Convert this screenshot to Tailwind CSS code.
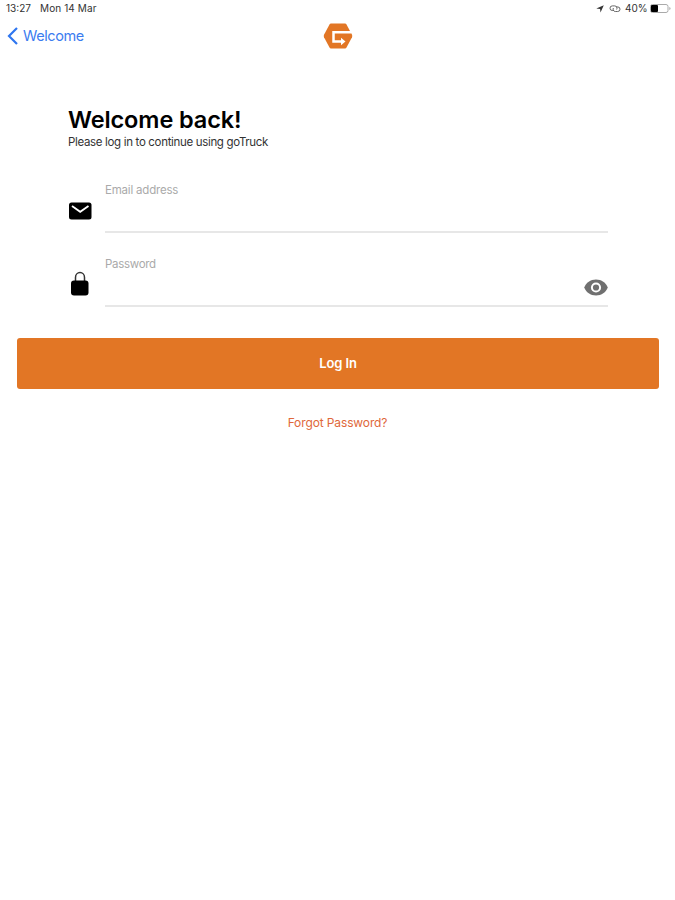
<!DOCTYPE html>
<html lang="en">

<head>
    <meta charset="UTF-8">
    <meta name="viewport" content="width=device-width, initial-scale=1.0">
    <script src="https://cdn.jsdelivr.net/npm/@tailwindcss/browser@4"></script>
    <title>goTruck - Log In</title>
</head>

<body class="bg-white h-screen overflow-hidden font-['Inter','Liberation_Sans',sans-serif] text-black">
    <!-- status bar -->
    <div class="flex justify-between items-center h-[17px] pl-[6px] pr-[4px] text-[10px] leading-[17px] text-[#333]">
        <div class="flex gap-[8px]">
            <span class="w-[26px] whitespace-nowrap">13:27</span>
            <span class="tracking-[0.1px] whitespace-nowrap">Mon 14 Mar</span>
        </div>
        <div class="flex items-center">
            <svg class="w-[8px] h-[8px] mr-[5px]" viewBox="0 0 8 8" fill="#333">
                <path d="M7.8.3 4.5 7.6 4.1 4 .3 3.6z" />
            </svg>
            <svg class="w-[12px] h-[9px] mr-[4px]" viewBox="0 0 12 9" fill="none" stroke="#666" stroke-width="1">
                <path d="M5 6.5H3.3a2.3 2.3 0 0 1 0-4.6H5.7A2.3 2.3 0 0 1 7.6 5.5M7 2.9h1.7a2.3 2.3 0 0 1 0 4.6H6.3A2.3 2.3 0 0 1 4.4 4" />
            </svg>
            <span class="w-[22px] mr-[3px] whitespace-nowrap">40%</span>
            <svg class="w-[21px] h-[9px]" viewBox="0 0 21 9">
                <rect x=".5" y=".5" width="17.5" height="8" rx="2" fill="none" stroke="#aaa" />
                <rect x="1" y="1" width="7" height="7" rx="1" fill="#000" />
                <path d="M19.3 3v3q1.2-.4 1.2-1.5T19.3 3z" fill="#aaa" />
            </svg>
        </div>
    </div>

    <!-- nav bar -->
    <header class="grid grid-cols-[1fr_30px_1fr] items-center h-[37px] px-[7px]">
        <a href="#" class="flex items-center gap-[5px] text-[#3b7cf0]">
            <svg class="w-[11px] h-[18px]" viewBox="0 0 11 18" fill="none" stroke="#2f76f0" stroke-width="2.2">
                <path d="M10 1 2 9l8 8" />
            </svg>
            <span class="text-[14.5px] leading-[20px] tracking-[-0.4px]">Welcome</span>
        </a>
        <svg class="w-[30px] h-[26px]" viewBox="0 0 30 26">
            <path d="M8 .5h14q1 0 1.5.9L29 11.8q.5 1.2 0 2.4l-5.5 10.4q-.5.9-1.5.9H8q-1 0-1.5-.9L1 14.2q-.5-1.2 0-2.4L6.5 1.400Q7 .5 8 .5z" fill="#e27625" />
            <path d="M28.3 9.200H10.500v9.300H18.500" fill="none" stroke="#fff" stroke-width="2.500" />
            <path d="M18 14.800v7.400l4.500-3.700z" fill="#fff" />
        </svg>
    </header>

    <main class="pt-[52px]">
        <div class="pl-[68px] pr-[67px]">
            <h1 class="text-[23.5px] leading-[27px] font-semibold tracking-[-0.1px] whitespace-nowrap">Welcome back!</h1>
            <p class="text-[11.5px] leading-[18px] tracking-[-0.33px] text-[#333] whitespace-nowrap">Please log in to continue using goTruck</p>

            <div class="flex items-center mt-[30px] h-[52px]">
                <svg class="w-[24px] h-[18px] mr-[13px] mt-[7px]" viewBox="0 0 24 18">
                    <rect x="1" y=".5" width="22.5" height="17" rx="2.5" fill="#000" />
                    <path d="m4 4 8.2 5.800L20.500 4" fill="none" stroke="#fff" stroke-width="1.800" />
                </svg>
                <div class="flex-1 h-full border-b-2 border-[#e7e7e7]">
                    <label class="block text-[11.5px] leading-[14px] pt-[2px] tracking-[-0.2px] text-[#aaa]">Email address</label>
                </div>
            </div>

            <div class="flex items-center mt-[22px] h-[52px]">
                <svg class="w-[24px] h-[25px] mr-[13px] mt-[5px]" viewBox="0 0 24 25">
                    <path d="M7.500 11V6.500a4.500 4.900 0 0 1 9 0V11" fill="none" stroke="#333" stroke-width="1.500" />
                    <rect x="3" y="9.500" width="17.500" height="15" rx="3" fill="#000" />
                </svg>
                <div class="flex-1 flex justify-between h-full border-b-2 border-[#e7e7e7]">
                    <label class="block text-[11.5px] leading-[14px] pt-[2px] tracking-[-0.3px] text-[#aaa]">Password</label>
                    <svg class="w-[24px] h-[17px] mt-[24px]" viewBox="0 0 24 17">
                        <path d="M12 .5C6.500.5 2 3.700.3 8.500 2 13.300 6.500 16.500 12 16.500s10-3.200 11.700-8C22 3.700 17.500.5 12 .5z" fill="#707070" />
                        <circle cx="12" cy="8.500" r="4.100" fill="#707070" stroke="#fff" stroke-width="2" />
                    </svg>
                </div>
            </div>
        </div>

        <button class="block w-[642px] h-[51px] ml-[17px] mt-[31px] pt-[1px] rounded-[3px] bg-[#e27625] text-white text-[13px] font-semibold tracking-[-0.1px]">Log In</button>
        <a href="#" class="block mt-[25px] text-center text-[12px] leading-[18px] tracking-[-0.12px] text-[#e0673a]">Forgot Password?</a>
    </main>
</body>

</html>
